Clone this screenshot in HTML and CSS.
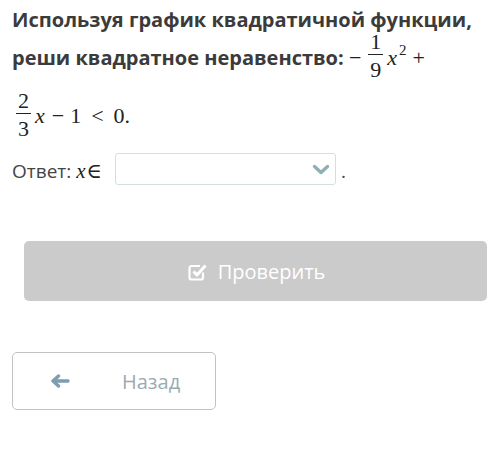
FILE: index.html
```html
<!DOCTYPE html>
<html lang="ru">
<head>
  <meta charset="UTF-8">
  <title>Квадратное неравенство</title>
  <link rel="stylesheet" href="styles.css">
</head>
<body>
  <div class="task">
    <p class="question"><span>Используя график квадратичной функции,</span> <span>реши квадратное неравенство:</span>
      <span class="math"><span class="op first">−</span><span class="frac frac-up"><span class="num">1</span><span class="den">9</span></span><i>x</i><sup>2</sup><span class="op">+</span></span>
      <span class="math"><span class="frac frac-low"><span class="num">2</span><span class="den">3</span></span><i>x</i><span class="op">−</span>1<span class="rel">&lt;</span>0.</span>
    </p>

    <div class="answer">
      Ответ: <span class="math small"><i>x</i>∈</span>
      <span class="select">
        <svg class="chevron" width="18" height="11" viewBox="0 0 18 11"><path d="M2.5 2.5 L9 8.5 L15.5 2.5" fill="none" stroke="#8fb0b4" stroke-width="3.4" stroke-linecap="round" stroke-linejoin="round"/></svg>
      </span>
      <span class="dot">.</span>
    </div>

    <button class="btn-check" type="button">
      <svg width="20" height="19" viewBox="0 0 20 19"><path d="M15 10.5 V15.5 A2 2 0 0 1 13 17.5 H3.5 A2 2 0 0 1 1.5 15.5 V6 A2 2 0 0 1 3.5 4 H12" fill="none" stroke="#fff" stroke-width="2.2"/><path d="M5.5 9.5 L9 13 L17.5 3.5" fill="none" stroke="#fff" stroke-width="3" stroke-linejoin="round"/></svg>
      Проверить
    </button>

    <button class="btn-back" type="button">
      <svg width="20" height="14" viewBox="0 0 20 14"><path d="M18 7 H4 M8.5 2 L3 7 L8.5 12" fill="none" stroke="#7d9db0" stroke-width="3.4" stroke-linecap="round" stroke-linejoin="round"/></svg>
      <span>Назад</span>
    </button>
  </div>
</body>
</html>
```

FILE: styles.css
```css
body {
  margin: 0;
  padding: 0 12px;
  background: #fff;
  font-family: "Open Sans", "Noto Sans", sans-serif;
}
.question {
  margin: 0;
  padding-top: 1px;
  font-size: 20px;
  font-weight: bold;
  line-height: 38px;
  color: #3b3b3b;
}
.math {
  font-family: "Liberation Serif", "DejaVu Serif", serif;
  font-weight: normal;
  font-size: 22px;
  white-space: nowrap;
  color: #222;
}
.math i {
  font-style: italic;
  padding-right: 1px;
}
.math sup {
  font-size: 15px;
  vertical-align: 10px;
  line-height: 0;
  margin-left: 1px;
}
.op {
  margin: 0 6px;
}
.op.first {
  margin-left: 0;
}
.rel {
  margin: 0 10px;
}
.frac {
  display: inline-flex;
  flex-direction: column;
  text-align: center;
  line-height: 24px;
  margin: 0 4px;
}
.frac-up {
  vertical-align: 16px;
  margin-top: -9px;
  margin-bottom: -6px;
  margin-left: 1px;
}
.frac-low {
  vertical-align: 15px;
  margin-top: 12px;
}
.num {
  border-bottom: 1px solid #222;
  padding: 0 2px;
}
.den {
  padding-top: 3px;
}
.answer {
  margin-top: 12px;
  font-size: 19px;
  color: #444;
  line-height: 24px;
}
.math.small {
  font-size: 21px;
}
.select {
  display: inline-block;
  position: relative;
  width: 219px;
  height: 30px;
  border: 1px solid #d3e0e0;
  border-radius: 3px;
  vertical-align: -7px;
  margin-left: 8px;
}
.chevron {
  position: absolute;
  right: 5px;
  top: 10px;
}
.btn-check {
  display: flex;
  align-items: center;
  justify-content: center;
  gap: 10px;
  width: 463px;
  height: 60px;
  margin: 56px 0 0 12px;
  border: none;
  border-radius: 5px;
  background: #cbcbcb;
  color: #fff;
  font-family: "Open Sans", sans-serif;
  font-size: 20px;
  padding: 0 0 0 2px;
}
.btn-back {
  display: flex;
  align-items: center;
  width: 204px;
  height: 58px;
  margin-top: 51px;
  padding: 0 0 0 37px;
  background: #fff;
  border: 1px solid #c2c2c2;
  border-radius: 5px;
  font-family: "Open Sans", sans-serif;
  font-size: 20px;
  color: #9aaab3;
}
.btn-back span {
  margin-left: 52px;
}
```
